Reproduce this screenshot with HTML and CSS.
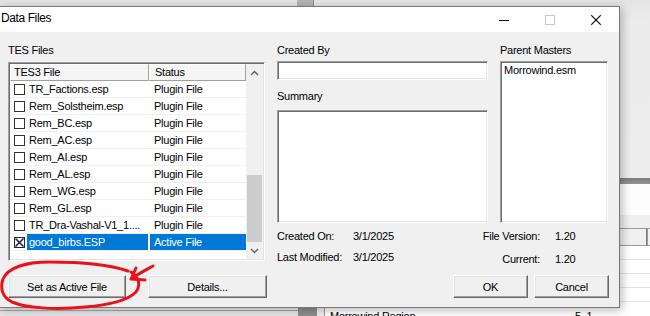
FILE: index.html
```html
<!DOCTYPE html>
<html>
<head>
<meta charset="utf-8">
<title>Data Files</title>
<link rel="stylesheet" href="styles.css">
</head>
<body>
<div class="desk">
  <div class="bg-top"><div class="bg-tab"></div></div>
  <div class="bg-bar"></div>
  <div class="bg-white"></div>
  <div class="bg-grey"></div>
  <div class="bg-head"><span class="bh1"></span><span class="bh2"></span></div>
  <div class="bg-row"></div>
  <div class="bg-row"></div>
  <div class="bg-row"></div>
  <div class="bg-row"></div>
  <div class="bg-row last">
    <div class="bl-left"></div>
    <div class="bl-block"></div>
    <div class="bl-gap"></div>
    <div class="bl-name">Morrowind Region</div>
    <div class="bl-num">5, 1</div>
  </div>
</div>

<div class="dialog">
  <div class="titlebar">
    <span class="title">Data Files</span>
    <div class="caption">
      <span class="cap-btn"><svg width="10" height="10" viewBox="0 0 10 10"><line x1="0" y1="5.5" x2="10" y2="5.5" stroke="#000" stroke-width="1"/></svg></span>
      <span class="cap-btn"><svg width="10" height="10" viewBox="0 0 10 10"><rect x="0.5" y="0.5" width="9" height="9" fill="none" stroke="#c6c6c6" stroke-width="1"/></svg></span>
      <span class="cap-btn"><svg width="10" height="10" viewBox="0 0 10 10"><path d="M0.3 0.3 L9.7 9.7 M9.7 0.3 L0.3 9.7" stroke="#000" stroke-width="1.1" fill="none"/></svg></span>
    </div>
  </div>

  <div class="body">
    <div class="main">
      <div class="col-files">
        <div class="lbl">TES Files</div>
        <div class="list sunken">
          <div class="list-table">
            <div class="list-head">
              <div class="hc hc1">TES3 File</div>
              <div class="hc hc2">Status</div>
            </div>
            <div class="row"><span class="chk-cell"><span class="chk"></span></span><span class="name">TR_Factions.esp</span><span class="status">Plugin File</span></div>
            <div class="row"><span class="chk-cell"><span class="chk"></span></span><span class="name">Rem_Solstheim.esp</span><span class="status">Plugin File</span></div>
            <div class="row"><span class="chk-cell"><span class="chk"></span></span><span class="name">Rem_BC.esp</span><span class="status">Plugin File</span></div>
            <div class="row"><span class="chk-cell"><span class="chk"></span></span><span class="name">Rem_AC.esp</span><span class="status">Plugin File</span></div>
            <div class="row"><span class="chk-cell"><span class="chk"></span></span><span class="name">Rem_AI.esp</span><span class="status">Plugin File</span></div>
            <div class="row"><span class="chk-cell"><span class="chk"></span></span><span class="name">Rem_AL.esp</span><span class="status">Plugin File</span></div>
            <div class="row"><span class="chk-cell"><span class="chk"></span></span><span class="name">Rem_WG.esp</span><span class="status">Plugin File</span></div>
            <div class="row"><span class="chk-cell"><span class="chk"></span></span><span class="name">Rem_GL.esp</span><span class="status">Plugin File</span></div>
            <div class="row"><span class="chk-cell"><span class="chk"></span></span><span class="name">TR_Dra-Vashal-V1_1....</span><span class="status">Plugin File</span></div>
            <div class="row sel"><span class="chk-cell"><svg class="chk-x" width="11" height="11" viewBox="0 0 11 11"><rect x="0.5" y="0.5" width="10" height="10" fill="#fff" stroke="#1a2a4a"/><path d="M1.5 1.5 L9.5 9.5 M9.5 1.5 L1.5 9.5" stroke="#1a2a4a" stroke-width="1.6"/></svg></span><span class="name">good_birbs.ESP</span><span class="status">Active File</span></div>
          </div>
          <div class="vscroll">
            <div class="sb-arrow"><svg width="9" height="6" viewBox="0 0 9 6"><path d="M1 5 L4.5 1.5 L8 5" fill="none" stroke="#606060" stroke-width="1.4"/></svg></div>
            <div class="sb-track"><div class="sb-thumb"></div></div>
            <div class="sb-arrow"><svg width="9" height="6" viewBox="0 0 9 6"><path d="M1 1 L4.5 4.5 L8 1" fill="none" stroke="#606060" stroke-width="1.4"/></svg></div>
          </div>
        </div>
      </div>

      <div class="col-mid">
        <div class="lbl">Created By</div>
        <div class="field sunken"></div>
        <div class="lbl lbl-summary">Summary</div>
        <div class="summary sunken"></div>
      </div>

      <div class="col-right">
        <div class="lbl">Parent Masters</div>
        <div class="masters sunken">Morrowind.esm</div>
      </div>

      <div class="info">
        <div class="info-dates">
          <span>Created On:</span><span>3/1/2025</span>
          <span>Last Modified:</span><span>3/1/2025</span>
        </div>
        <div class="info-ver">
          <span class="r">File Version:</span><span>1.20</span>
          <span class="r">Current:</span><span>1.20</span>
        </div>
      </div>
    </div>

    <div class="footer">
      <div class="btn btn-active">Set as Active File</div>
      <div class="btn btn-details">Details...</div>
      <div class="btn btn-ok">OK</div>
      <div class="btn btn-cancel">Cancel</div>
    </div>
  </div>
</div>

<svg class="annot" width="650" height="316" viewBox="0 0 650 316">
  <path d="M128 271 C110 265 80 262 50 262 C25 262 8 268 3 279 C0 288 2 297 12 302 C26 308 55 310 85 307 C110 305 128 300 136 292 C141 285 139 277 131 272" fill="none" stroke="#e8121c" stroke-width="3" stroke-linecap="round"/>
  <path d="M153 266 C146 270 138 274 131 279 M131 279 L136 268 M131 279 L145 280" fill="none" stroke="#e8121c" stroke-width="3" stroke-linecap="round" stroke-linejoin="round"/>
</svg>
</body>
</html>
```

FILE: styles.css
```css
html, body {
  margin: 0;
  padding: 0;
}

body {
  width: 650px;
  height: 316px;
  overflow: hidden;
  position: relative;
  font-family: "Liberation Sans", Arial, sans-serif;
  font-size: 11px;
  letter-spacing: -0.25px;
  color: #000;
}

/* ---------- background application ---------- */
.desk {
  width: 650px;
  height: 316px;
  display: flex;
  flex-direction: column;
  background: #ececec;
}

.bg-top {
  height: 178px;
  background: linear-gradient(#e4e4e4, #ececec 20px, #ededed);
  display: flex;
}

.bg-tab {
  margin-left: 297px;
  width: 16px;
  height: 6px;
  background: #b4b4b4;
  border-right: 1px solid #8a8a8a;
}

.bg-bar {
  height: 6px;
  background: linear-gradient(#7c7c7c, #939393);
}

.bg-white {
  height: 31px;
  background: linear-gradient(90deg, #f4f4f4, #fdfdfd);
}

.bg-grey {
  height: 13px;
  background: #efefef;
}

.bg-head {
  height: 18px;
  display: flex;
  box-sizing: border-box;
  background: #f2f2f2;
}

.bh1 {
  flex: 1;
  border: 1px solid #9a9a9a;
  border-right-color: #7c7c7c;
  background: #f0f0f0;
}

.bh2 {
  width: 2px;
  border: 1px solid #9a9a9a;
  border-right: none;
}

.bg-row {
  height: 14px;
  box-sizing: border-box;
  border-bottom: 1px solid #e4e4e4;
  background: #fff;
}

.bg-row.last {
  display: flex;
  border-bottom: none;
  background: #fff;
}

.bl-left {
  width: 298px;
  background: linear-gradient(#eeeeee 0 8px, #a8a8a8 8px 9px, #e6e6e6 9px);
}

.bl-block {
  width: 19px;
  background: #8e8e8e;
}

.bl-gap {
  width: 7px;
  background: #f0f0f0;
  border-right: 1px solid #9a9a9a;
}

.bl-name {
  padding: 7px 0 0 5px;
  line-height: 14px;
  width: 245px;
}

.bl-num {
  padding-top: 7px;
  line-height: 14px;
}

/* ---------- dialog window ---------- */
.dialog {
  position: absolute;
  left: -1px;
  top: 6px;
  width: 621px;
  height: 302px;
  box-sizing: border-box;
  border: 1px solid #787878;
  background: #f0f0f0;
  box-shadow: 2px 2px 9px rgba(0, 0, 0, 0.28);
  display: flex;
  flex-direction: column;
}

.titlebar {
  height: 25px;
  flex: none;
  background: #fff;
  display: flex;
  align-items: flex-start;
}

.title {
  padding: 4px 0 0 1px;
  font-size: 12px;
  line-height: 14px;
  letter-spacing: -0.4px;
}

.caption {
  margin-left: auto;
  display: flex;
}

.cap-btn {
  width: 46px;
  height: 25px;
  display: flex;
  align-items: center;
  justify-content: center;
  padding-top: 1px;
  box-sizing: border-box;
}

.body {
  flex: 1;
  padding: 12px 10px 0 8px;
}

.main {
  display: grid;
  grid-template-columns: 257px 211px 108px;
  grid-template-rows: auto auto;
  column-gap: 12px;
}

.col-files {
  grid-row: 1 / span 2;
}

.lbl {
  height: 13px;
  line-height: 13px;
  white-space: nowrap;
}

.lbl-summary {
  margin-top: 10px;
}

.sunken {
  box-sizing: border-box;
  border: 1px solid;
  border-color: #a0a0a0 #ffffff #ffffff #a0a0a0;
  box-shadow: inset 1px 1px 0 #6d6d6d, inset -1px -1px 0 #e3e3e3;
  background: #fff;
  padding: 1px;
}

/* list view */
.list {
  margin-top: 5px;
  height: 199px;
  display: flex;
}

.list-table {
  width: 236px;
  display: flex;
  flex-direction: column;
  background: #fff;
}

.list-head {
  display: flex;
  height: 17px;
}

.hc {
  height: 17px;
  box-sizing: border-box;
  border: 1px solid;
  border-color: #ffffff #a0a0a0 #a0a0a0 #ffffff;
  background: #f5f5f5;
  padding-left: 3px;
  line-height: 15px;
  white-space: nowrap;
}

.hc1 {
  width: 139px;
}

.hc2 {
  width: 97px;
  padding-left: 5px;
}

.row {
  display: flex;
  height: 17px;
  box-sizing: border-box;
  border-bottom: 1px solid #f0f0f0;
  white-space: nowrap;
}

.chk-cell {
  width: 17px;
  display: flex;
  align-items: center;
  justify-content: center;
  padding-left: 1px;
  box-sizing: border-box;
}

.chk {
  width: 11px;
  height: 11px;
  box-sizing: border-box;
  border: 1px solid #333;
  background: #fff;
}

.chk-x {
  display: block;
}

.name {
  width: 121px;
  padding-left: 2px;
  box-sizing: border-box;
  line-height: 16px;
  overflow: hidden;
}

.status {
  width: 96px;
  margin-left: 2px;
  padding-left: 4px;
  box-sizing: border-box;
  line-height: 16px;
}

.row.sel .name,
.row.sel .status {
  background: #0078d7;
  color: #fff;
}

/* scrollbar */
.vscroll {
  width: 17px;
  background: #f0f0f0;
  display: flex;
  flex-direction: column;
}

.sb-arrow {
  height: 17px;
  display: flex;
  align-items: center;
  justify-content: center;
}

.sb-track {
  flex: 1;
  display: flex;
  flex-direction: column;
  justify-content: flex-end;
  padding: 0 1px;
}

.sb-thumb {
  height: 67px;
  background: #cdcdcd;
}

/* middle column */
.field {
  margin-top: 4px;
  height: 19px;
}

.summary {
  margin-top: 7px;
  height: 113px;
}

.masters {
  margin-top: 4px;
  height: 162px;
  padding: 2px 3px;
  line-height: 13px;
}

/* info */
.info {
  grid-column: 2 / 4;
  display: flex;
  justify-content: space-between;
  padding-top: 7px;
}

.info-dates {
  display: grid;
  grid-template-columns: 76px auto;
  row-gap: 5px;
  line-height: 13px;
  white-space: nowrap;
}

.info-ver {
  display: grid;
  grid-template-columns: auto 53px;
  column-gap: 15px;
  row-gap: 10px;
  line-height: 13px;
  white-space: nowrap;
}

.info-ver .r {
  text-align: right;
}

/* buttons */
.footer {
  display: flex;
  margin-top: 9px;
}

.btn {
  height: 23px;
  box-sizing: border-box;
  border: 1px solid;
  border-color: #ffffff #696969 #696969 #ffffff;
  box-shadow: inset -1px -1px 0 #a0a0a0, inset 1px 1px 0 #e3e3e3;
  background: #f0f0f0;
  display: flex;
  align-items: center;
  justify-content: center;
  white-space: nowrap;
}

.btn-active {
  width: 118px;
}

.btn-details {
  width: 119px;
  margin-left: 22px;
}

.btn-ok {
  width: 75px;
  margin-left: auto;
}

.btn-cancel {
  width: 75px;
  margin-left: 6px;
}

/* annotation */
.annot {
  position: absolute;
  left: 0;
  top: 0;
  pointer-events: none;
}
```
